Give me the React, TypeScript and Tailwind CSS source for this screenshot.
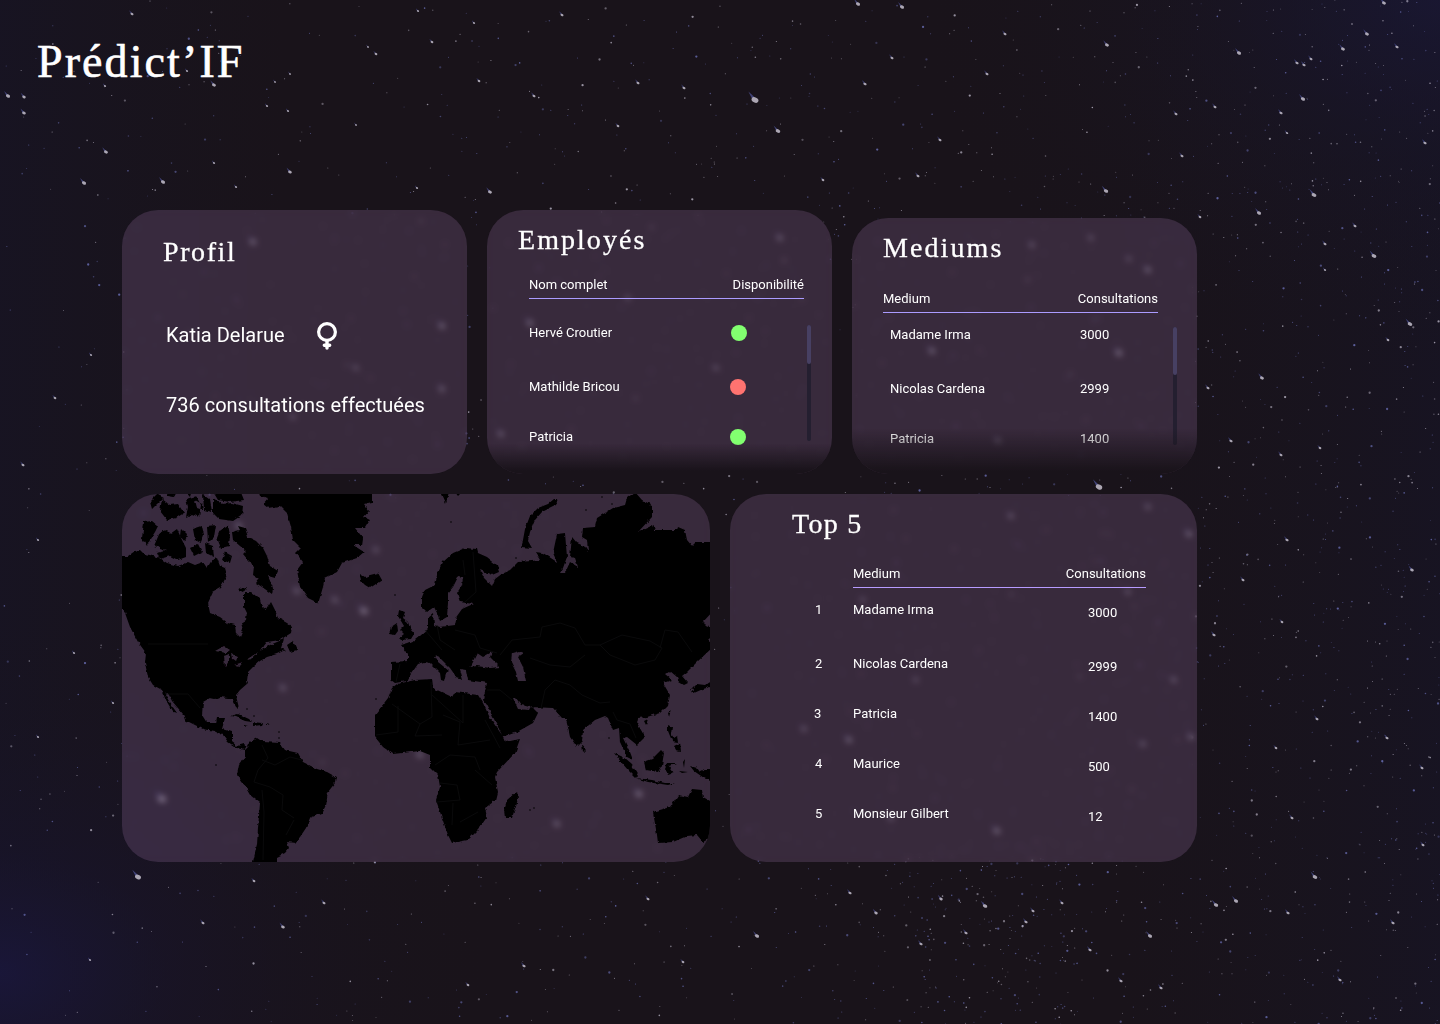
import type { ReactNode } from "react";

/* ---------- night sky ---------- */

function makeRandom(seed: number) {
  let s = seed;
  return () => {
    s = (s + 0x6d2b79f5) | 0;
    let t = Math.imul(s ^ (s >>> 15), 1 | s);
    t = (t + Math.imul(t ^ (t >>> 7), 61 | t)) ^ t;
    return ((t ^ (t >>> 14)) >>> 0) / 4294967296;
  };
}

const random = makeRandom(42);

function speck(x: number, y: number) {
  const k = random();
  return {
    x,
    y,
    r: k > 0.92 ? 1.15 : k > 0.7 ? 0.8 : 0.5,
    o: 0.35 + random() * 0.5,
    blue: random() > 0.45,
  };
}

const dust = [
  ...Array.from({ length: 2300 }, () => speck(1440 * Math.pow(random(), 0.8), random() * 1024)),
  ...Array.from({ length: 220 }, () => {
    const spread = (random() + random() + random()) / 3;
    return speck(760 + spread * 480, 840 + random() * 184);
  }),
  ...Array.from({ length: 480 }, () => speck(1000 + 440 * Math.sqrt(random()), random() * 1024)),
];

// x, y, radius; the tail points to the upper left
const brightStars: number[][] = [
  [132, 14, 1.3], [8, 96, 1.8], [24, 97, 1.5], [24, 113, 1.6], [106, 152, 1.7], [84, 183, 1.8], [163, 182, 1.8],
  [214, 85, 1.7], [290, 172, 1.6], [432, 42, 1.2], [376, 54, 1.2], [368, 47, 0.9], [418, 11, 1], [417, 188, 1],
  [275, 82, 0.9], [214, 163, 1], [236, 187, 1], [267, 106, 1], [288, 111, 1], [356, 125, 0.9], [105, 86, 1],
  [187, 71, 1], [290, 74, 0.9], [474, 23, 1], [479, 81, 1.2], [490, 192, 1.7], [755, 100, 3], [778, 131, 2],
  [858, 4, 1.8], [902, 7, 1.8], [534, 96, 1.3], [638, 83, 1.3], [684, 88, 1.3], [562, 15, 1.3], [618, 126, 1.2],
  [865, 84, 1.4], [892, 58, 1.3], [940, 140, 1.3], [1005, 34, 1.3], [987, 74, 1.3], [918, 176, 1.3], [823, 180, 1.2],
  [1107, 45, 1.7], [1239, 53, 1.8], [1384, 3, 1.7], [1367, 34, 1.7], [1343, 49, 1.7], [1297, 63, 1.4], [1304, 65, 1.4],
  [1303, 99, 1.8], [1281, 113, 1.4], [1215, 107, 1.3], [1176, 114, 1.3], [1182, 156, 1.3], [1106, 191, 1.9],
  [1314, 195, 2.1], [1259, 213, 1.8], [1355, 226, 1.3], [1325, 244, 1.3], [1374, 256, 2], [1425, 143, 1.4],
  [1397, 47, 1.4], [1311, 59, 1.3], [1325, 270, 1], [1200, 217, 1.2], [1287, 133, 1.1], [1410, 324, 2],
  [1388, 340, 1.2], [1262, 378, 1.7], [1208, 388, 1.3], [1231, 441, 1.4], [1320, 448, 1.2], [1281, 455, 1.3],
  [1099, 487, 2.8], [1287, 540, 1.4], [1412, 570, 1.6], [1243, 580, 1.3], [1214, 635, 1.4], [1282, 622, 1.2],
  [1317, 719, 1.3], [1387, 738, 1.3], [1422, 768, 1.3], [1276, 748, 1.2], [1423, 845, 1.3], [1292, 818, 1.3],
  [138, 877, 2.6], [203, 923, 1.3], [283, 927, 1.6], [324, 903, 1.3], [254, 881, 1.2], [90, 960, 1], [524, 966, 1.4],
  [468, 985, 1.2], [648, 899, 1.3], [757, 936, 1.8], [683, 962, 1.2], [850, 893, 1.4], [876, 913, 1.5],
  [941, 899, 1.5], [985, 906, 1.9], [966, 933, 1.4], [921, 944, 1.4], [1026, 922, 1.4], [1033, 911, 1.3],
  [1062, 903, 1.3], [1090, 950, 1.4], [1121, 981, 1.4], [1150, 936, 1.8], [1161, 988, 1.4], [1216, 905, 1.9],
  [1236, 901, 1.8], [1315, 877, 2], [1288, 913, 1.4], [1340, 980, 1.4], [1393, 923, 1.4], [38, 540, 1],
  [55, 398, 1.2], [23, 465, 1.3], [91, 355, 1], [74, 653, 1], [113, 703, 1], [38, 737, 1],
];

// stars that glow softly behind the frosted cards
const veiledStars: number[][] = [
  [253, 242, 2.3], [442, 326, 2.3], [442, 389, 2.1], [356, 368, 1.7], [293, 417, 1.7], [530, 323, 2.3],
  [780, 238, 2.1], [501, 434, 2.1], [716, 368, 1.7], [628, 298, 1.6], [932, 351, 2.3], [1119, 353, 2.5],
  [1148, 270, 2.2], [1091, 238, 1.7], [1032, 245, 1.8], [998, 441, 2.1], [1129, 259, 1.6], [1189, 534, 2.3],
  [849, 740, 2.3], [997, 831, 2.4], [891, 818, 1.9], [1191, 737, 2.1], [1174, 680, 1.9], [1128, 592, 1.8],
  [1143, 744, 1.8], [804, 729, 1.8], [916, 680, 1.6], [863, 600, 1.6], [1011, 516, 1.9], [1148, 507, 1.8],
  [162, 799, 3.2], [364, 611, 2.9], [335, 600, 2], [297, 591, 2.1], [239, 526, 2.2], [639, 794, 2.6],
  [557, 824, 2.2], [420, 755, 2.2], [376, 550, 1.8], [283, 688, 2],
];

function Star({ x, y, r, opacity }: { x: number; y: number; r: number; opacity: number }) {
  return (
    <g opacity={opacity}>
      <path
        d={`M${x - 2.2 * r} ${y - 2.8 * r}L${x + r * 0.5} ${y - r * 0.3}L${x - r * 0.6} ${y + r * 0.4}Z`}
        fill="#5a5fae"
        opacity="0.7"
      />
      <ellipse cx={x} cy={y} rx={r * 1.2} ry={r * 0.85} transform={`rotate(25 ${x} ${y})`} fill="#bcb7c4" />
    </g>
  );
}

function Sky() {
  return (
    <svg className="absolute inset-0 h-[1024px] w-[1440px]" viewBox="0 0 1440 1024" aria-hidden="true">
      <defs>
        <radialGradient id="glowBL" cx="0" cy="0.95" r="0.34">
          <stop offset="0" stopColor="#1a173e" stopOpacity="0.8" />
          <stop offset="0.35" stopColor="#18142c" stopOpacity="0.5" />
          <stop offset="1" stopColor="#19141c" stopOpacity="0" />
        </radialGradient>
        <radialGradient id="glowTR" cx="1" cy="0" r="0.36">
          <stop offset="0" stopColor="#1a1836" stopOpacity="0.75" />
          <stop offset="0.4" stopColor="#181528" stopOpacity="0.5" />
          <stop offset="1" stopColor="#19141c" stopOpacity="0" />
        </radialGradient>
        <linearGradient id="sideTint">
          <stop offset="0" stopColor="#171424" stopOpacity="0.8" />
          <stop offset="0.2" stopColor="#18141f" stopOpacity="0" />
          <stop offset="0.78" stopColor="#18141f" stopOpacity="0" />
          <stop offset="1" stopColor="#171424" stopOpacity="0.8" />
        </linearGradient>
      </defs>
      <rect width="1440" height="1024" fill="#19131a" />
      <rect width="1440" height="1024" fill="url(#sideTint)" />
      <rect width="1440" height="1024" fill="url(#glowBL)" />
      <rect width="1440" height="1024" fill="url(#glowTR)" />
      {dust.map((d, i) => (
        <circle key={i} cx={d.x} cy={d.y} r={d.r} fill={d.blue ? "#6a6fb5" : "#b9b4c4"} opacity={d.o} />
      ))}
      {brightStars.map(([x, y, r], i) => (
        <Star key={i} x={x} y={y} r={r} opacity={0.9} />
      ))}
      {veiledStars.map(([x, y, r], i) => (
        <Star key={i} x={x} y={y} r={r} opacity={0.75} />
      ))}
    </svg>
  );
}

/* ---------- world map ---------- */

const land = [
  // North and Central America
  "M120 556L128 556 135 551 140 550 144 554 150 555 160 558 167 563 178 566 188 562 195 565 203 562 207 568 212 560 217 558 220 566 225 568 227 575 223 583 220 588 213 592 208 603 210 613 220 617 228 623 235 625 236 633 240 637 243 630 241 623 246 620 247 613 244 607 244 593 252 593 260 599 262 607 266 610 271 602 275 610 278 618 287 623 292 627 291 633 280 640 267 642 260 651 270 645 284 639 281 648 285 650 277 654 267 657 260 661 253 667 248 672 247 680 248 683 240 690 236 695 237 700 239 708 236 706 233 700 228 698 220 697 215 699 210 698 203 702 202 715 207 723 216 723 217 718 225 718 222 729 232 732 232 742 237 746 244 744 248 747 245 750 237 748 228 742 223 735 215 731 203 729 185 720 183 714 172 701 168 693 165 694 170 703 177 713 173 712 167 702 162 690 153 685 148 677 145 663 146 653 138 642 130 627 125 613 120 606Z",
  // South America
  "M248 743L257 738 263 742 280 743 285 750 298 753 303 762 317 769 327 772 336 777 335 783 328 792 326 805 322 813 310 818 306 828 300 837 295 843 287 842 289 848 285 853 277 857 277 866 252 866 257 845 258 828 260 803 250 795 243 783 237 775 239 765 245 757 245 749Z",
  // Greenland
  "M258 490L260 496 268 498 263 504 268 508 280 506 287 513 291 527 293 540 301 548 296 553 303 562 297 570 300 587 308 598 314 601 318 604 323 587 325 578 337 572 342 563 357 558 364 552 353 545 362 545 363 538 355 528 365 528 370 520 364 517 369 511 364 504 372 502 372 490Z",
  // Iceland
  "M360 574L365 577 370 575 378 573 382 580 370 588 365 585 361 581Z",
  // Europe and Asia
  "M422 597L425 590 435 585 437 575 443 562 453 553 465 548 477 549 478 553 487 557 497 565 499 572 492 575 480 570 484 578 492 586 495 579 503 573 510 570 518 562 532 561 540 560 535 552 543 553 557 562 553 553 557 534 565 533 567 557 563 568 560 573 565 573 570 562 578 567 575 558 570 557 572 537 577 543 584 546 588 552 587 540 582 537 583 528 595 527 597 518 613 508 625 505 627 498 635 492 642 500 652 505 652 517 638 532 649 527 653 525 655 530 677 530 678 527 685 530 687 540 692 546 696 542 714 542 714 610 702 623 714 628 714 646 697 662 687 672 682 676 688 683 684 685 679 682 677 677 670 671 665 674 672 680 663 683 670 695 668 705 660 713 647 717 638 718 637 723 645 737 637 745 627 737 623 738 630 752 633 760 627 757 620 742 619 728 613 730 608 718 605 716 595 720 583 730 582 742 577 747 570 737 566 718 562 718 553 708 530 707 521 705 516 698 513 698 518 709 529 710 531 706 538 713 533 723 517 732 503 737 497 725 487 705 483 700 487 683 468 680 466 670 460 669 463 680 457 678 450 668 438 656 435 657 438 662 449 671 446 673 444 681 441 680 440 673 430 663 425 662 418 664 411 674 407 681 395 683 391 680 391 662 408 661 408 655 401 645 408 643 415 640 420 636 428 629 428 617 433 613 434 625 440 627 455 625 457 616 462 609 473 604 460 602 457 593 462 585 463 578 458 577 453 587 448 593 448 603 447 617 440 621 437 613 434 607 427 612 422 607ZM470 667L477 653 483 657 492 652 490 657 500 667 490 668 477 666ZM512 653L519 651 524 653 518 657 523 667 526 681 518 681 516 672 511 662Z",
  // Africa
  "M397 684L415 680 432 679 433 688 452 697 455 692 478 695 483 703 490 718 502 735 505 742 520 739 515 753 497 772 495 777 498 792 496 800 485 808 487 817 478 830 468 840 452 843 448 835 442 818 436 800 440 787 438 775 430 767 430 755 420 751 393 754 383 747 375 737 375 715 388 698 392 688Z",
  "M517 791L518 799 512 818 505 818 504 810 507 800Z",
  // Australia and New Guinea
  "M653 812L670 807 678 795 688 797 692 789 702 790 703 797 714 803 714 836 703 842 697 835 687 836 673 842 658 843 657 835Z",
  "M690 766L697 768 700 772 707 769 714 769 714 783 704 778 694 771Z",
  // British Isles
  "M399 610L405 612 403 618 408 622 410 628 414 634 411 639 401 640 399 638 404 634 400 630 404 626 398 616Z",
  "M391 627L397 623 398 631 395 635 389 634Z",
  // Japan
  "M690 691L697 684 705 685 714 678 714 686 703 689 694 693ZM690 689L694 690 692 694ZM714 634L708 640 714 644Z",
  "M668 713L671 710 669 717ZM644 721L648 719 646 725ZM582 744L586 749 583 752Z",
  // Philippines
  "M668 725L672 727 671 734 674 738 677 736 678 742 672 741 668 731ZM674 746L680 743 681 751 676 750Z",
  // Sumatra, Java, Borneo, Sulawesi
  "M614 753L623 757 632 765 638 775 636 778 628 770 621 762ZM636 778L652 780 665 783 675 783 668 785 648 782ZM644 762L652 759 661 750 664 753 662 765 658 772 646 770ZM667 763L677 763 669 766 674 773 668 775 665 768Z",
  "M683 762L685 759 684 768ZM679 771L688 772 682 773Z",
  // Caribbean
  "M230 716L238 714 249 719 252 722 245 721 236 717ZM253 722L263 723 262 725 253 726ZM244 725L248 726 244 726ZM266 724L270 725 266 725Z",
  // Novaya Zemlya, Svalbard
  "M557 499L558 504 554 506 542 512 535 520 530 532 528 541 532 548 521 547 523 540 525 529 530 516 538 508 548 504 554 499ZM441 492L449 492 446 503ZM455 492L462 492 458 496Z",
  // Canadian arctic archipelago
  "M144 522L152 521 158 526 155 532 150 540 147 546 142 538Z",
  "M160 532L166 530 170 534 177 529 182 540 186 548 186 557 178 560 170 556 160 559 157 552 166 550 154 546Z",
  "M150 502L158 494 164 497 157 504 152 509ZM162 499L170 505 178 504 184 513 176 518 167 520 160 511Z",
  "M166 490L178 490 174 497 168 496ZM184 490L192 490 190 497ZM195 500L202 504 203 510 197 508Z",
  "M186 499L196 496 201 505 199 517 192 514 186 517 188 507ZM181 528L187 534 185 542 180 536ZM193 529L202 526 204 535 201 543 195 540ZM190 548L198 544 202 552 194 556Z",
  "M207 526L216 525 214 537 208 543ZM203 494L210 499 212 512 204 510ZM205 543L213 546 214 557 206 553Z",
  "M213 498L222 504 232 503 243 506 242 515 233 521 219 519 213 513ZM212 490L240 490 244 500 230 502 218 500Z",
  "M220 530L228 525 230 535 229 546 221 548 217 538Z",
  "M232 532L240 530 238 526 245 528 248 537 256 541 263 548 267 556 270 566 278 571 275 578 268 576 273 588 272 594 262 587 256 583 259 579 253 575 254 566 248 560 243 554 246 551 240 546 233 540Z",
  "M225 552L232 556 230 563 222 560ZM240 588L247 587 243 593 237 590Z",
  "M287 645L293 641 297 650 290 652Z",
];

const islets = [
  [451, 522], [516, 558], [395, 595], [216, 765], [530, 810], [534, 808], [376, 699], [247, 709], [254, 716],
  [279, 732], [279, 738], [609, 738], [586, 510], [602, 497], [612, 504],
];

const lakes =
  "M215 651L224 646 230 650 226 653ZM224 656L229 654 229 661 225 667ZM231 654L238 656 236 661 232 658ZM234 665L243 662 240 666ZM246 660L258 652 252 659ZM246 563L251 562 250 570 246 568ZM226 577L230 580 228 586Z";

const borders =
  "M148 644H208M166 694L188 694 200 708M262 760L275 765 290 757 302 760M262 745L268 758 258 770 254 782 270 787 283 795 282 810 294 818M262 790L264 812 263 860M294 820L286 835M392 704L420 724 432 717 431 682M432 695L463 723 463 695M398 706L398 732 376 735M420 724L415 736 442 735M443 715L460 722 458 745 490 740M435 765L450 755 475 757 480 770M440 783L457 785 460 800 437 802M453 803L452 825M475 770L492 785M460 822L478 812M485 720L500 748M425 630L442 650M437 625L440 640 455 650M455 630L475 635 480 648 497 653M463 560L465 575M473 552L476 592 465 602M400 664L396 682M500 655L512 640 540 637 542 627 560 623 575 628 585 645 600 645 622 635 650 641 662 648 655 660 635 665 610 655 600 645M660 648L665 630 678 632 692 652M530 658L550 665 570 667 585 655M545 690L555 680 570 685 582 695 600 703 610 702M541 708L545 690M613 712L617 720 630 724 636 738M487 690L500 690 512 700";

function WorldMap() {
  return (
    <svg className="h-[368px] w-[588px]" viewBox="122 494 588 368" role="img" aria-label="Carte du monde">
      <defs>
        <filter id="coast" x="-2%" y="-2%" width="104%" height="104%">
          <feTurbulence type="fractalNoise" baseFrequency="0.2" numOctaves="2" seed="7" result="n" />
          <feDisplacementMap in="SourceGraphic" in2="n" scale="3.4" xChannelSelector="R" yChannelSelector="G" />
        </filter>
      </defs>
      <g filter="url(#coast)">
        <path d={land.join("")} fill="#000" fillRule="evenodd" />
        <path d={lakes} fill="#392b3d" />
      </g>
      {islets.map(([x, y]) => (
        <circle key={`${x}-${y}`} cx={x} cy={y} r="0.8" fill="#000" />
      ))}
      <path d={borders} fill="none" stroke="#0f0e10" strokeWidth="0.7" />
    </svg>
  );
}

/* ---------- cards ---------- */

function Card({ className, children }: { className: string; children: ReactNode }) {
  return (
    <section
      className={`relative shrink-0 overflow-hidden rounded-[36px] bg-[rgba(150,112,163,0.25)] backdrop-blur-[3px] ${className}`}
    >
      {children}
    </section>
  );
}

const heading = "font-['Liberation_Serif',serif] text-[28px] leading-8 [-webkit-text-stroke:0.3px_white]";

function TableHead({ left, right, className }: { left: string; right: string; className: string }) {
  return (
    <div className={`flex h-6 justify-between border-b leading-5 ${className}`}>
      <span>{left}</span>
      <span>{right}</span>
    </div>
  );
}

const employees = [
  { name: "Hervé Croutier", row: "mb-[34px]", dot: "ml-px bg-[#82ff70]" },
  { name: "Mathilde Bricou", row: "mb-[30px]", dot: "bg-[#ff7370]" },
  { name: "Patricia", row: "", dot: "bg-[#82ff70]" },
];

const mediums = [
  { name: "Madame Irma", count: "3000", row: "mb-[34px]" },
  { name: "Nicolas Cardena", count: "2999", row: "mb-[30px]" },
  { name: "Patricia", count: "1400", row: "" },
];

const ranking = [
  { rank: "1", name: "Madame Irma", count: "3000", row: "mb-[34px]", rankPad: "pl-[85px]" },
  { rank: "2", name: "Nicolas Cardena", count: "2999", row: "mb-[30px]", rankPad: "pl-[85px]" },
  { rank: "3", name: "Patricia", count: "1400", row: "mb-[30px]", rankPad: "pl-[84px]" },
  { rank: "4", name: "Maurice", count: "500", row: "mb-[30px]", rankPad: "pl-[85px]" },
  { rank: "5", name: "Monsieur Gilbert", count: "12", row: "", rankPad: "pl-[85px]" },
];

export default function App() {
  return (
    <main className="relative h-[1024px] w-[1440px] overflow-hidden bg-[#19131a] font-['Roboto',sans-serif] text-[13px] text-white">
      <Sky />
      <div className="relative">
        <header className="h-[210px] pt-[34px] pl-[37px]">
          <h1 className="font-['Liberation_Serif',serif] text-[46px] leading-[56px] tracking-[2.1px] [-webkit-text-stroke:0.6px_white]">
            Prédict’IF
          </h1>
        </header>

        <div className="ml-[122px] flex w-[1075px] flex-col gap-5">
          <div className="flex items-end gap-5">
            <Card className="h-[264px] w-[345px] pt-[26px] pl-11 text-[20px]">
              <h2 className={`-ml-[3px] tracking-[1.6px] ${heading}`}>Profil</h2>
              <div className="mt-[51px] flex h-8 items-center">
                <p className="w-[150px]">Katia Delarue</p>
                <svg className="mt-[2px] h-[30px] w-[22px]" viewBox="0 0 22 30" fill="none" stroke="#fff" aria-label="Femme">
                  <circle cx="11" cy="11" r="8.4" strokeWidth="3.2" />
                  <path d="M11 20V27M8.3 24.3H13.7" strokeWidth="3.4" strokeLinecap="round" />
                </svg>
              </div>
              <p className="mt-[38px] leading-8 whitespace-nowrap">736 consultations effectuées</p>
            </Card>

            <Card className="h-[264px] w-[345px] pt-[14px]">
              <h2 className={`ml-[31px] tracking-[2.05px] ${heading}`}>Employés</h2>
              <TableHead left="Nom complet" right="Disponibilité" className="mt-[19px] ml-[42px] w-[275px] border-[#ab9bff]" />
              <div className="mt-[26px] ml-[42px] flex">
                <ul className="-mt-[2px] w-[278px]">
                  {employees.map((e) => (
                    <li key={e.name} className={`flex h-5 items-center ${e.row}`}>
                      <span className="w-[201px]">{e.name}</span>
                      <span className={`size-4 rounded-full ${e.dot}`} />
                    </li>
                  ))}
                </ul>
                <div className="h-[116px] w-1 rounded-full bg-[#241f30]">
                  <div className="h-[39px] rounded-full bg-[#474063]" />
                </div>
              </div>
              <div className="absolute inset-x-0 bottom-0 h-[31px] bg-linear-to-b from-[#19131a]/0 to-[#19131a] to-90%" />
            </Card>

            <Card className="h-[256px] w-[345px] pt-[14px]">
              <h2 className={`ml-[31px] tracking-[2.1px] ${heading}`}>Mediums</h2>
              <TableHead left="Medium" right="Consultations" className="mt-[25px] ml-[31px] w-[275px] border-[#ab9bff]" />
              <div className="mt-[14px] ml-[38px] flex">
                <ul className="-mt-[2px] w-[283px]">
                  {mediums.map((m) => (
                    <li key={m.name} className={`flex h-5 items-center ${m.row}`}>
                      <span className="w-[190px]">{m.name}</span>
                      <span>{m.count}</span>
                    </li>
                  ))}
                </ul>
                <div className="h-[118px] w-1 rounded-full bg-[#241f30]">
                  <div className="h-12 rounded-full bg-[#474063]" />
                </div>
              </div>
              <div className="absolute inset-x-0 bottom-0 h-[46px] bg-linear-to-b from-[#19131a]/0 to-[#19131a] to-95%" />
            </Card>
          </div>

          <div className="flex gap-5">
            <Card className="h-[368px] w-[588px]">
              <WorldMap />
            </Card>

            <Card className="h-[368px] w-[467px] pt-[14px]">
              <h2 className={`ml-[62px] tracking-[1.3px] ${heading}`}>Top 5</h2>
              <TableHead left="Medium" right="Consultations" className="mt-[24px] ml-[123px] w-[293px] border-[#b79bff]" />
              <ul className="mt-[12px]">
                {ranking.map((r) => (
                  <li key={r.rank} className={`flex h-5 items-center ${r.row}`}>
                    <span className={`w-[123px] ${r.rankPad}`}>{r.rank}</span>
                    <span className="w-[235px]">{r.name}</span>
                    <span className="pt-[6px]">{r.count}</span>
                  </li>
                ))}
              </ul>
            </Card>
          </div>
        </div>
      </div>
    </main>
  );
}
